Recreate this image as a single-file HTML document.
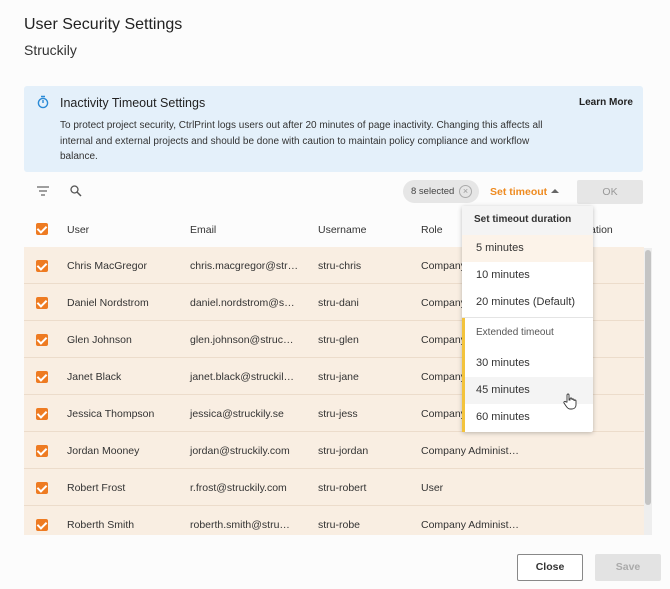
<!DOCTYPE html>
<html><head><style>
*{box-sizing:border-box;margin:0;padding:0}
body{width:670px;height:589px;background:#fcfcfc;font-family:"Liberation Sans",sans-serif;color:#333;position:relative;overflow:hidden;font-size:11px}
.a{position:absolute}
.cb{position:absolute;left:36px;width:12px;height:12px;background:#ee7b22;border-radius:2px}
.cb:after{content:"";position:absolute;left:3px;top:1px;width:4px;height:7px;border:solid #fff;border-width:0 2px 2px 0;transform:rotate(45deg)}
.row{position:absolute;left:24px;width:620px;height:37px;background:#f9eee2;border-bottom:1px solid #ecdccb}
.row span{position:absolute;top:13px;font-size:10.5px;color:#333;white-space:nowrap}
.dd div{position:absolute;left:0;width:131px;font-size:11px;padding-left:14px}
</style></head><body>
<div class="a" style="left:24px;top:16px;font-size:16px;color:#222">User Security Settings</div>
<div class="a" style="left:24px;top:42px;font-size:14px;color:#333">Struckily</div>
<div class="a" style="left:24px;top:86px;width:619px;height:86px;background:#e4f0fa;border-radius:3px"></div>
<svg class="a" style="left:37px;top:95px" width="12" height="14" viewBox="0 0 12 14"><circle cx="6" cy="8" r="4.6" fill="none" stroke="#2a8ad6" stroke-width="1.4"/><path d="M4 1.5h4M6 5v3" stroke="#2a8ad6" stroke-width="1.4"/></svg>
<div class="a" style="left:60px;top:96px;font-size:12.5px;color:#222">Inactivity Timeout Settings</div>
<div class="a" style="left:579px;top:97px;font-size:10px;font-weight:bold;color:#222">Learn More</div>
<div class="a" style="left:60px;top:118px;width:500px;font-size:10px;line-height:15.5px;color:#333">To protect project security, CtrlPrint logs users out after 20 minutes of page inactivity. Changing this affects all internal and external projects and should be done with caution to maintain policy compliance and workflow balance.</div>
<svg class="a" style="left:37px;top:186px" width="12" height="10"><path d="M0 1h12M2 5h8M4 9h4" stroke="#666" stroke-width="1.3"/></svg>
<svg class="a" style="left:70px;top:185px" width="12" height="12"><circle cx="4.5" cy="4.5" r="3.5" fill="none" stroke="#555" stroke-width="1.3"/><path d="M7 7l4 4" stroke="#555" stroke-width="1.5"/></svg>
<div class="a" style="left:403px;top:180px;width:76px;height:23px;background:#e6e6e6;border-radius:12px;font-size:9.5px;line-height:23px;padding-left:8px;color:#444">8 selected</div>
<div class="a" style="left:459px;top:185px;width:13px;height:13px;border:1px solid #aaa;border-radius:50%;font-size:9px;line-height:11px;text-align:center;color:#999">×</div>
<div class="a" style="left:490px;top:186px;font-size:10.5px;font-weight:bold;color:#ee8a1f">Set timeout</div>
<div class="a" style="left:551px;top:189px;border:4px solid transparent;border-bottom:4px solid #666;border-top:0"></div>
<div class="a" style="left:577px;top:180px;width:66px;height:24px;background:#e6e6e6;border-radius:2px;text-align:center;line-height:24px;font-size:10.5px;color:#999">OK</div>
<div class="cb" style="top:223px"></div>
<div class="a" style="left:67px;top:224px;font-size:10.5px">User</div>
<div class="a" style="left:190px;top:224px;font-size:10.5px">Email</div>
<div class="a" style="left:318px;top:224px;font-size:10.5px">Username</div>
<div class="a" style="left:421px;top:224px;font-size:10.5px">Role</div>
<div class="a" style="left:590px;top:224px;font-size:10.5px">ation</div>
<div class="row" style="top:247px"><div class="cb" style="left:12px;top:13px"></div><span style="left:43px">Chris MacGregor</span><span style="left:166px">chris.macgregor@str…</span><span style="left:294px">stru-chris</span><span style="left:397px">Company Administ…</span></div>
<div class="row" style="top:284px"><div class="cb" style="left:12px;top:13px"></div><span style="left:43px">Daniel Nordstrom</span><span style="left:166px">daniel.nordstrom@s…</span><span style="left:294px">stru-dani</span><span style="left:397px">Company Administ…</span></div>
<div class="row" style="top:321px"><div class="cb" style="left:12px;top:13px"></div><span style="left:43px">Glen Johnson</span><span style="left:166px">glen.johnson@struc…</span><span style="left:294px">stru-glen</span><span style="left:397px">Company Administ…</span></div>
<div class="row" style="top:358px"><div class="cb" style="left:12px;top:13px"></div><span style="left:43px">Janet Black</span><span style="left:166px">janet.black@struckil…</span><span style="left:294px">stru-jane</span><span style="left:397px">Company Administ…</span></div>
<div class="row" style="top:395px"><div class="cb" style="left:12px;top:13px"></div><span style="left:43px">Jessica Thompson</span><span style="left:166px">jessica@struckily.se</span><span style="left:294px">stru-jess</span><span style="left:397px">Company Administ…</span></div>
<div class="row" style="top:432px"><div class="cb" style="left:12px;top:13px"></div><span style="left:43px">Jordan Mooney</span><span style="left:166px">jordan@struckily.com</span><span style="left:294px">stru-jordan</span><span style="left:397px">Company Administ…</span></div>
<div class="row" style="top:469px"><div class="cb" style="left:12px;top:13px"></div><span style="left:43px">Robert Frost</span><span style="left:166px">r.frost@struckily.com</span><span style="left:294px">stru-robert</span><span style="left:397px">User</span></div>
<div class="row" style="top:506px;height:29px;border:0"><div class="cb" style="left:12px;top:13px"></div><span style="left:43px">Roberth Smith</span><span style="left:166px">roberth.smith@stru…</span><span style="left:294px">stru-robe</span><span style="left:397px">Company Administ…</span></div>
<div class="a" style="left:644px;top:248px;width:8px;height:287px;background:#eee"></div>
<div class="a" style="left:645px;top:250px;width:6px;height:255px;background:#c4c4c4;border-radius:3px"></div>
<div class="a dd" style="left:462px;top:206px;width:131px;height:226px;background:#fff;box-shadow:0 1px 5px rgba(0,0,0,.25);border-radius:2px">
<div style="top:0;height:29px;background:#f4f4f4;line-height:27px;font-size:10px;font-weight:bold;color:#333;padding-left:12px">Set timeout duration</div>
<div style="top:29px;height:27px;background:#fcf3e9;line-height:27px">5 minutes</div>
<div style="top:56px;height:27px;line-height:27px">10 minutes</div>
<div style="top:83px;height:27px;line-height:27px">20 minutes (Default)</div>
<div style="top:111px;height:1px;background:#e4e4e4;padding:0"></div>
<div style="top:112px;left:0;width:3px;height:114px;background:#f3c33c;padding:0"></div>
<div style="top:112px;height:30px;line-height:30px;font-size:10px;color:#555">Extended timeout</div>
<div style="top:144px;height:27px;line-height:27px">30 minutes</div>
<div style="top:171px;left:3px;width:128px;height:27px;line-height:27px;background:#f4f4f4;padding-left:11px">45 minutes</div>
<div style="top:198px;height:27px;line-height:27px">60 minutes</div>
</div>
<svg class="a" style="left:563px;top:393px" width="14" height="17" viewBox="0 0 14 17"><path d="M4 9V2a1 1 0 0 1 2 0v5h1V6a1 1 0 0 1 2 0v1a1 1 0 0 1 2 0v1a1 1 0 0 1 2 0v4c0 2-1.5 4-4 4H7c-2 0-3-1.5-4-3L1 10a1 1 0 0 1 2-1z" fill="#fff" stroke="#333" stroke-width="0.9"/></svg>
<div class="a" style="left:517px;top:554px;width:66px;height:27px;border:1px solid #888;border-radius:2px;background:#fff;text-align:center;line-height:25px;font-size:10.5px;font-weight:bold;color:#333">Close</div>
<div class="a" style="left:595px;top:554px;width:66px;height:27px;background:#e3e3e3;border-radius:2px;text-align:center;line-height:27px;font-size:10.5px;font-weight:bold;color:#aaa">Save</div>
</body></html>
